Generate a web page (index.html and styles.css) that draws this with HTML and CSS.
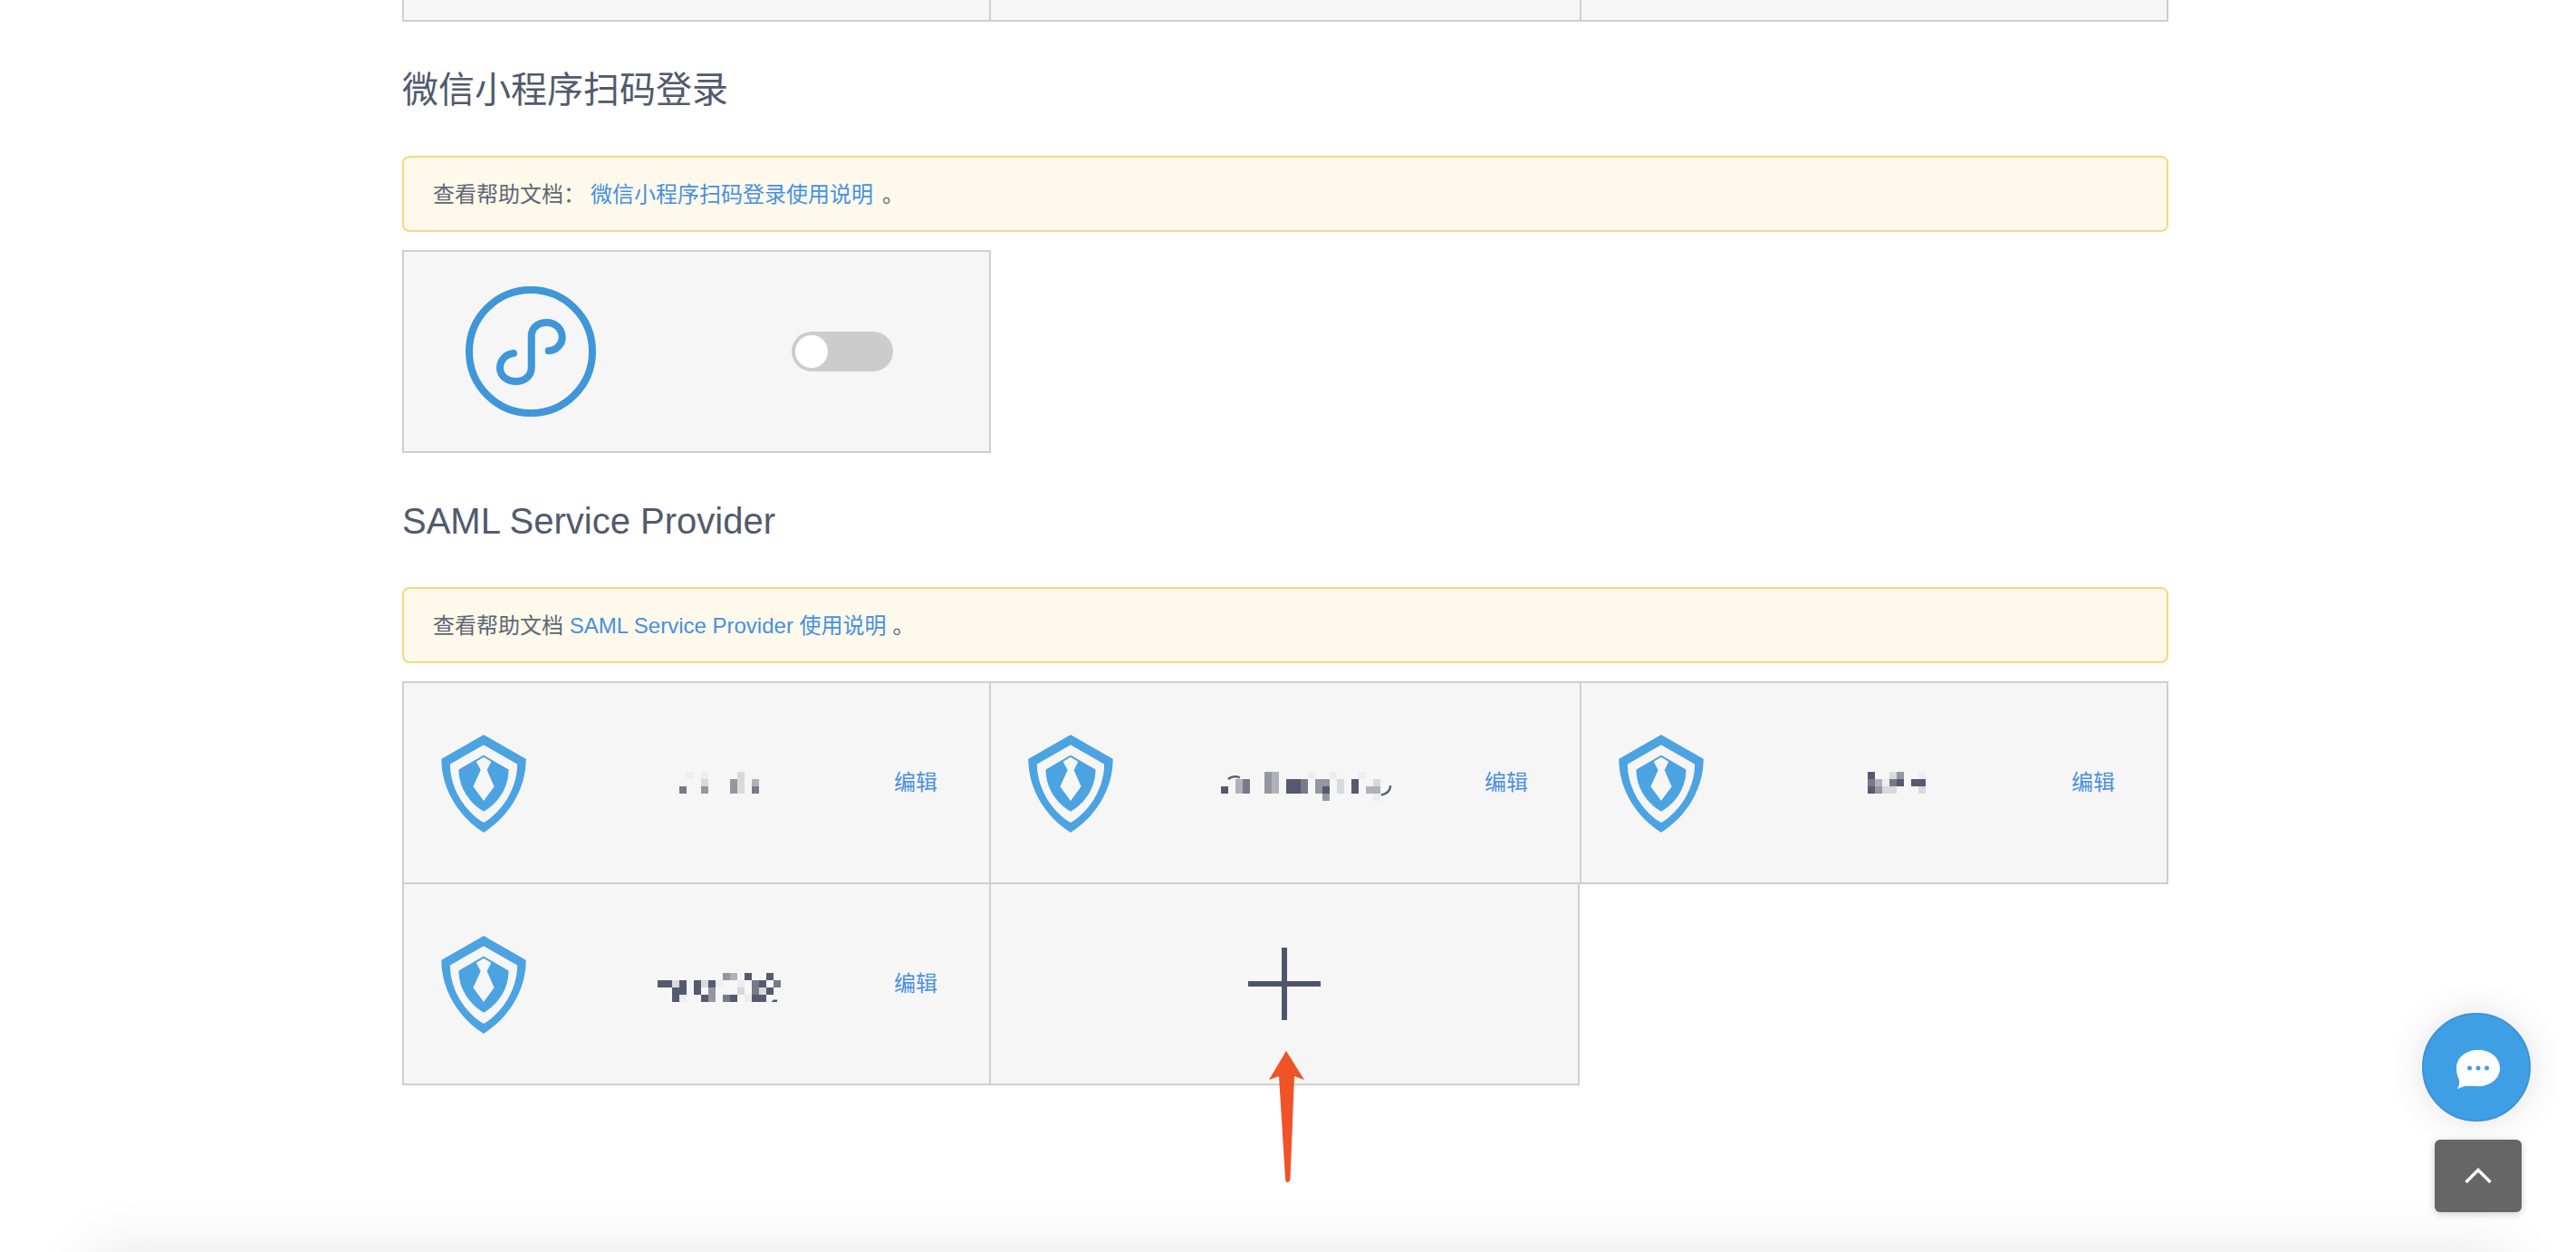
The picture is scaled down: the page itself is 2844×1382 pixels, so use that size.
FILE: index.html
```html
<!DOCTYPE html>
<html lang="zh-CN">
<head>
<meta charset="utf-8">
<title>SAML Service Provider</title>
<link rel="stylesheet" href="styles.css">
</head>
<body>
<svg class="defs" width="0" height="0" aria-hidden="true">
  <symbol id="shield" viewBox="52 62 282 326">
    <path fill="#4ba3e2" fill-rule="evenodd" d="M193 62L334 143C334 250 270 340 193 388C116 340 52 250 52 143ZM193 96L81 160C81 240 130 318 193 355C256 318 305 240 305 160Z"/>
    <path fill="#4ba3e2" d="M193 130L276 178C276 240 240 290 193 318C146 290 110 240 110 178Z"/>
    <path fill="#f6f6f6" d="M168 152L193 137L218 152L204 180L228 235L193 282L158 235L183 180Z"/>
  </symbol>
</svg>

<main class="page">
  <div class="grid grid--cut">
    <div class="card"></div>
    <div class="card"></div>
    <div class="card"></div>
  </div>

  <h2 class="title">微信小程序扫码登录</h2>
  <p class="notice">查看帮助文档：<a class="notice__link notice__link--gap">微信小程序扫码登录使用说明</a><span class="notice__end notice__end--wide">。</span></p>
  <div class="grid">
    <div class="card card--mini">
      <svg class="mini-icon" viewBox="0 0 144 144">
        <circle cx="72" cy="72" r="68" fill="none" stroke="#3f96d8" stroke-width="8"/>
        <path fill="none" stroke="#3f96d8" stroke-width="8" stroke-linecap="round" d="M53 74C44 75 38 82 38 90C38 99 46 105 55.700 105C65 105 72.700 99 72.700 90V55C72.700 46 80 40 89.700 40C99 40 106.700 47 106.700 56.700C106.700 64 100 71 91.700 71.300"/>
      </svg>
      <span class="switch"><span class="switch__thumb"></span></span>
    </div>
  </div>

  <h2 class="title">SAML Service Provider</h2>
  <p class="notice">查看帮助文档 <a class="notice__link">SAML Service Provider 使用说明</a><span class="notice__end">。</span></p>
  <div class="grid">
    <div class="card">
      <svg class="shield"><use href="#shield"/></svg>
      <div class="card__name">
        <svg class="mosaic mosaic--a" viewBox="0 0 11 3" shape-rendering="crispEdges">
          <rect class="v" x="1" y="0" width="1" height="1"/><rect class="v" x="3" y="0" width="1" height="1"/><rect class="l" x="8" y="0" width="1" height="3"/>
          <rect class="l" x="3" y="1" width="1" height="1"/><rect class="m" x="7" y="1" width="1" height="2"/><rect class="k" x="10" y="1" width="1" height="1"/>
          <rect class="n" x="0" y="2" width="1" height="1"/><rect class="m" x="3" y="2" width="1" height="1"/><rect class="n" x="10" y="2" width="1" height="1"/>
        </svg>
      </div>
      <a class="card__edit">编辑</a>
    </div>
    <div class="card">
      <svg class="shield"><use href="#shield"/></svg>
      <div class="card__name">
        <svg class="mosaic mosaic--b" viewBox="0 0 24 4" shape-rendering="crispEdges">
          <rect class="m" x="6" y="0" width="1" height="3"/><rect class="k" x="7" y="0" width="1" height="3"/>
          <rect class="v" x="12" y="0" width="1" height="1"/><rect class="v" x="15" y="0" width="1" height="1"/><rect class="v" x="19" y="0" width="1" height="1"/>
          <rect class="k" x="2" y="1" width="1" height="2"/><rect class="n" x="3" y="1" width="1" height="2"/>
          <rect class="d" x="9" y="1" width="2" height="2"/><rect class="n" x="11" y="1" width="1" height="2"/>
          <rect class="m" x="13" y="1" width="2" height="1"/><rect class="m" x="13" y="2" width="1" height="1"/><rect class="d" x="14" y="2" width="1" height="1"/>
          <rect class="l" x="16" y="1" width="1" height="2"/><rect class="d" x="18" y="1" width="1" height="2"/><rect class="l" x="21" y="1" width="1" height="1"/>
          <rect class="d" x="0" y="2" width="1" height="1"/><rect class="k" x="20" y="2" width="2" height="1"/>
          <rect class="m" x="14" y="3" width="1" height="1"/><rect class="v" x="21" y="3" width="1" height="1"/>
          <path class="mosaic__arc" shape-rendering="auto" d="M1 1Q1.700 .4 2.600 .8"/>
          <path class="mosaic__arc" shape-rendering="auto" d="M23.400 1.900Q23.300 3 22.100 3.200"/>
        </svg>
      </div>
      <a class="card__edit">编辑</a>
    </div>
    <div class="card">
      <svg class="shield"><use href="#shield"/></svg>
      <div class="card__name">
        <svg class="mosaic mosaic--c" viewBox="0 0 8 3" shape-rendering="crispEdges">
          <rect class="d" x="0" y="0" width="1" height="1"/><rect class="l" x="3" y="0" width="1" height="1"/><rect class="m" x="4" y="0" width="1" height="1"/><rect class="v" x="7" y="0" width="1" height="1"/>
          <rect class="n" x="0" y="1" width="1" height="1"/><rect class="k" x="1" y="1" width="1" height="1"/><rect class="v" x="2" y="1" width="1" height="1"/><rect class="n" x="3" y="1" width="1" height="1"/><rect class="d" x="4" y="1" width="1" height="1"/><rect class="d" x="6" y="1" width="2" height="1"/>
          <rect class="d" x="0" y="2" width="1" height="1"/><rect class="m" x="1" y="2" width="1" height="1"/><rect class="l" x="2" y="2" width="2" height="1"/><rect class="l" x="7" y="2" width="1" height="1"/>
        </svg>
      </div>
      <a class="card__edit">编辑</a>
    </div>
    <div class="card">
      <svg class="shield"><use href="#shield"/></svg>
      <div class="card__name">
        <svg class="mosaic mosaic--d" viewBox="0 0 17 4" shape-rendering="crispEdges">
          <rect class="m" x="9" y="0" width="1" height="1"/><rect class="k" x="10" y="0" width="1" height="1"/><rect class="d" x="12" y="0" width="1" height="1"/><rect class="d" x="15" y="0" width="1" height="1"/>
          <rect class="d" x="0" y="1" width="2" height="1"/><rect class="l" x="2" y="1" width="1" height="1"/><rect class="d" x="3" y="1" width="1" height="2"/>
          <rect class="d" x="5" y="1" width="1" height="2"/><rect class="l" x="6" y="1" width="1" height="1"/><rect class="d" x="7" y="1" width="1" height="1"/><rect class="v" x="8" y="1" width="1" height="1"/>
          <rect class="v" x="11" y="1" width="1" height="1"/><rect class="n" x="13" y="1" width="1" height="2"/><rect class="d" x="14" y="1" width="1" height="1"/><rect class="n" x="16" y="1" width="1" height="1"/>
          <rect class="d" x="2" y="2" width="1" height="2"/><rect class="m" x="7" y="2" width="1" height="2"/><rect class="l" x="11" y="2" width="1" height="1"/><rect class="l" x="14" y="2" width="1" height="1"/><rect class="d" x="15" y="2" width="1" height="1"/>
          <rect class="v" x="3" y="3" width="1" height="1"/><rect class="d" x="6" y="3" width="1" height="1"/><rect class="n" x="9" y="3" width="1" height="1"/><rect class="d" x="10" y="3" width="1" height="1"/><rect class="v" x="12" y="3" width="1" height="1"/><rect class="d" x="13" y="3" width="2" height="1"/>
          <path class="d" shape-rendering="auto" d="M16 3.700L16.500 3.700V4H15.700Z"/>
        </svg>
      </div>
      <a class="card__edit">编辑</a>
    </div>
    <div class="card card--add">
      <span class="plus"></span>
    </div>
  </div>
</main>

<footer class="footer"></footer>

<svg class="arrow" viewBox="0 0 40 146">
  <path fill="#f05327" d="M20 0L40 32L29 28L24.500 141Q24 145 21.500 145Q19 145 19 141L12 28L1 32Z"/>
</svg>

<button class="chat" type="button" aria-label="chat">
  <svg class="chat__icon" viewBox="0 0 48 43">
    <path fill="#fff" d="M24 0C37 0 48 8 48 20C48 32 37 40 24 40C19 40 12 39.500 9 40C7 40.500 4 42 1 43C3 40 3.500 36 3 33C1 29 0 25 0 20C0 8 11 0 24 0Z"/>
    <circle cx="14.500" cy="20" r="2.500" fill="#3f9fe5"/><circle cx="24" cy="20" r="2.500" fill="#3f9fe5"/><circle cx="33.500" cy="20" r="2.500" fill="#3f9fe5"/>
  </svg>
</button>
<button class="to-top" type="button" aria-label="top">
  <svg class="to-top__icon" viewBox="0 0 30 18"><path fill="none" stroke="#fff" stroke-width="3.500" d="M1.500 16L15 2.500L28.500 16"/></svg>
</button>
</body>
</html>
```
FILE: styles.css
```css
html {
  height: 100%;
  overflow: hidden;
  background: #fff;
}
body {
  margin: 0;
  height: 100%;
  overflow: hidden;
  position: relative;
  font-family: "Liberation Sans", "Noto Sans CJK SC", sans-serif;
  color: #515a6e;
}
.defs {
  position: absolute;
}
.page {
  width: 1950px;
  margin-left: 444px;
}
.grid {
  display: grid;
  grid-template-columns: 648px 652px 650px;
}
.grid--cut {
  margin-top: -200px;
}
.card {
  box-sizing: border-box;
  height: 224px;
  margin: 0 -2px -2px 0;
  padding: 0 57px 0 41px;
  display: flex;
  align-items: center;
  background: #f6f6f6;
  border: 2px solid #cfcfcf;
}
.card:nth-child(3n) {
  margin-right: 0;
}
.title {
  margin: 47px 0 45px;
  height: 56px;
  font-size: 40px;
  font-weight: 400;
  line-height: 56px;
  color: #515a6e;
}
.grid + .title {
  margin-top: 49px;
}
.notice {
  box-sizing: border-box;
  height: 84px;
  margin: 0 0 20px;
  padding: 0 32px 3px;
  display: flex;
  align-items: center;
  white-space: pre;
  font-size: 24px;
  color: #5f6775;
  background: #fef9ea;
  border: 2px solid #fbd581;
  border-radius: 8px;
}
.notice__link {
  color: #4590e6;
}
.notice__link--gap {
  margin-left: 6px;
}
.notice__end {
  margin-left: 7px;
}
.notice__end--wide {
  margin-left: 10px;
}
.mini-icon {
  width: 144px;
  height: 144px;
  margin-left: 27px;
  flex: none;
}
.switch {
  box-sizing: border-box;
  width: 112px;
  height: 44px;
  margin-left: 216px;
  padding: 4px;
  flex: none;
  background: #ccc;
  border-radius: 22px;
}
.switch__thumb {
  display: block;
  width: 36px;
  height: 36px;
  background: #fff;
  border-radius: 50%;
}
.shield {
  width: 94px;
  height: 108px;
  margin-top: 2px;
  flex: none;
}
.card__name {
  flex: 1;
  display: flex;
  justify-content: center;
  padding-left: 20px;
}
.mosaic {
  display: block;
  height: 32px;
  position: relative;
  top: 4px;
}
.mosaic--a { width: 88px; height: 24px; top: 0; }
.mosaic--b { width: 192px; }
.mosaic--c { width: 64px; height: 24px; top: 0; }
.mosaic--d { width: 136px; }
.mosaic__arc {
  fill: none;
  stroke: #555a6e;
  stroke-width: 0.3;
}
.d { fill: #555a6e; }
.n { fill: #767a8a; }
.m { fill: #94979f; }
.k { fill: #b0b2bb; }
.l { fill: #d8d9dd; }
.v { fill: #ededf0; }
.card__edit {
  width: 48px;
  flex: none;
  font-size: 24px;
  line-height: 32px;
  color: #4a90e2;
}
.card--add {
  justify-content: center;
  padding: 0;
}
.card--add:nth-child(3n + 2) {
  margin-right: 0;
}
.plus {
  display: block;
  width: 80px;
  height: 80px;
  background:
    linear-gradient(#4e566b, #4e566b) center / 80px 6px no-repeat,
    linear-gradient(#4e566b, #4e566b) center / 6px 80px no-repeat;
}
.footer {
  position: absolute;
  bottom: 0;
  left: 300px;
  right: 274px;
  height: 0;
  box-shadow: 0 200px 60px 200px rgba(0, 0, 0, 0.1);
}
.arrow {
  position: absolute;
  left: 1400px;
  top: 1160px;
  width: 40px;
  height: 146px;
}
.chat {
  position: fixed;
  right: 50px;
  bottom: 144px;
  box-sizing: border-box;
  width: 120px;
  height: 120px;
  padding: 0;
  display: flex;
  align-items: center;
  justify-content: center;
  background: #3f9fe5;
  border: 2px solid #3f92d4;
  border-radius: 50%;
  box-shadow: 0 0 40px rgba(0, 0, 0, 0.12);
}
.chat__icon {
  display: block;
  width: 48px;
  height: 43px;
  position: relative;
  left: 2px;
  top: 2px;
}
.to-top {
  position: fixed;
  right: 60px;
  bottom: 44px;
  width: 96px;
  height: 80px;
  padding: 0;
  display: flex;
  align-items: center;
  justify-content: center;
  background: #666;
  border: 0;
  border-radius: 6px;
  box-shadow: 0 2px 8px rgba(0, 0, 0, 0.2);
}
.to-top__icon {
  display: block;
  width: 30px;
  height: 18px;
}
```
